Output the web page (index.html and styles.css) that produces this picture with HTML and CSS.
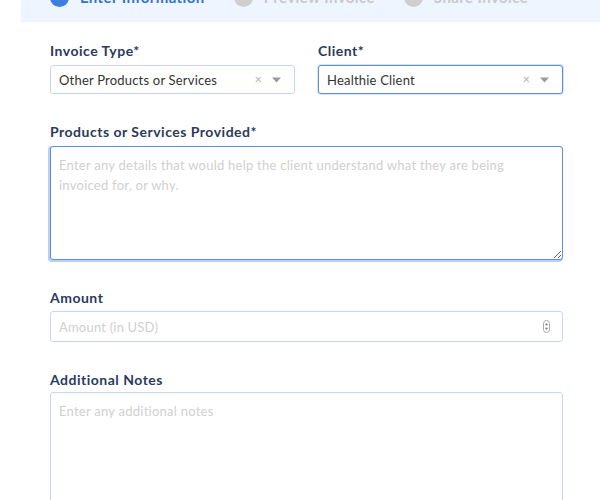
FILE: index.html
```html
<!DOCTYPE html>
<html lang="en">
<head>
<meta charset="utf-8">
<title>Create Invoice</title>
<link rel="stylesheet" href="styles.css">
</head>
<body>
<div class="page">
  <div class="steps">
    <div class="steps-inner">
      <div class="step step-active">
        <span class="step-dot"><svg width="10" height="10" viewBox="0 0 10 10"><path d="M2 5.2l2 2 4-4.4" fill="none" stroke="#fff" stroke-width="1.6"/></svg></span>
        <span class="step-label">Enter Information</span>
      </div>
      <div class="step">
        <span class="step-dot"></span>
        <span class="step-label">Preview Invoice</span>
      </div>
      <div class="step">
        <span class="step-dot"></span>
        <span class="step-label">Share Invoice</span>
      </div>
    </div>
  </div>

  <form class="form">
    <div class="row">
      <div class="field">
        <label class="label">Invoice Type*</label>
        <div class="select">
          <span class="select-value">Other Products or Services</span>
          <span class="select-clear">×</span>
          <svg class="select-arrow" width="9" height="6" viewBox="0 0 9 6"><path d="M0 0.5h9L4.5 5.5z" fill="#9a9a9a"/></svg>
        </div>
      </div>
      <div class="field">
        <label class="label">Client*</label>
        <div class="select select-focus">
          <span class="select-value">Healthie Client</span>
          <span class="select-clear">×</span>
          <svg class="select-arrow" width="9" height="6" viewBox="0 0 9 6"><path d="M0 0.5h9L4.5 5.5z" fill="#9a9a9a"/></svg>
        </div>
      </div>
    </div>

    <div class="field">
      <label class="label">Products or Services Provided*</label>
      <textarea class="textarea textarea-focus" placeholder="Enter any details that would help the client understand what they are being invoiced for, or why."></textarea>
    </div>

    <div class="field field-amount">
      <label class="label">Amount</label>
      <div class="input">
        <input class="input-field" type="text" placeholder="Amount (in USD)">
        <svg class="spinner" width="7" height="13" viewBox="0 0 7 13"><rect x="0.5" y="0.5" width="6" height="12" rx="3" fill="#fff" stroke="#a8a8a8"/><path d="M3.5 3l1.6 2.2H1.9z" fill="#777"/><path d="M3.5 10l1.6-2.2H1.9z" fill="#777"/></svg>
      </div>
    </div>

    <div class="field field-notes">
      <label class="label">Additional Notes</label>
      <textarea class="textarea textarea-tall" placeholder="Enter any additional notes"></textarea>
    </div>
  </form>
</div>
</body>
</html>
```
FILE: styles.css
```css
html, body {
  margin: 0;
  padding: 0;
  background: #fff;
}
body {
  font-family: Lato, "Noto Sans", "Liberation Sans", sans-serif;
  color: #333;
}
.page {
  padding-left: 21px;
}
.steps {
  height: 22px;
  background: #eef5fe;
  overflow: hidden;
}
.steps-inner {
  display: flex;
  align-items: center;
  margin-top: -14px;
  padding-left: 29px;
  height: 22px;
}
.step {
  display: flex;
  align-items: center;
  margin-right: 29px;
}
.step-dot {
  width: 19px;
  height: 19px;
  border-radius: 50%;
  background: #cfcfcf;
  display: flex;
  align-items: center;
  justify-content: center;
  margin-right: 11px;
}
.step-label {
  font-size: 15px;
  font-weight: 700;
  color: #c9c9c9;
  letter-spacing: 0.4px;
}
.step-active .step-dot {
  background: #3d7fe0;
}
.step-active .step-label {
  color: #3670d2;
}
.form {
  padding: 20px 0 0 29px;
  width: 513px;
}
.row {
  display: grid;
  grid-template-columns: 245px 245px;
  column-gap: 23px;
}
.field {
  margin-bottom: 29px;
}
.label {
  display: block;
  font-size: 14px;
  line-height: 17px;
  font-weight: 700;
  color: #2b3a5c;
  letter-spacing: 0.5px;
  margin-bottom: 6px;
}
.field-amount .label {
  margin-bottom: 5px;
}
.field-notes .label {
  margin-bottom: 4px;
}
.select {
  box-sizing: border-box;
  height: 29px;
  border: 1px solid #c3d8f7;
  border-radius: 3px;
  display: flex;
  align-items: center;
  padding: 0 13px 0 8px;
  background: #fff;
}
.select-focus {
  border-color: #5d8fe6;
  box-shadow: 0 0 0 1px #d3e3fb;
}
.select-value {
  flex: 1;
  font-size: 13px;
  color: #333;
  letter-spacing: 0.2px;
}
.select-clear {
  font-size: 13px;
  color: #b5b5b5;
  margin-right: 10px;
  line-height: 1;
}
.select-arrow {
  display: block;
}
.textarea {
  box-sizing: border-box;
  display: block;
  width: 513px;
  height: 114px;
  border: 1px solid #c3d8f7;
  border-radius: 3px;
  padding: 8px 40px 8px 8px;
  font-family: Lato, "Noto Sans", "Liberation Sans", sans-serif;
  font-size: 13px;
  line-height: 20px;
  letter-spacing: 0.25px;
  color: #333;
  resize: vertical;
  outline: none;
  margin: 0;
}
.textarea::placeholder {
  color: #d0d0d0;
}
.textarea-focus {
  border-color: #5d8fe6;
  box-shadow: -1px 1px 0 1px #b8d0f6;
}
.textarea-tall {
  height: 120px;
}
.input {
  box-sizing: border-box;
  height: 31px;
  border: 1px solid #c3d8f7;
  border-radius: 3px;
  display: flex;
  align-items: center;
  padding: 0 12px 0 8px;
}
.input-field {
  flex: 1;
  border: none;
  outline: none;
  padding: 0;
  font-family: Lato, "Noto Sans", "Liberation Sans", sans-serif;
  font-size: 13px;
  letter-spacing: 0.2px;
  color: #333;
  background: transparent;
}
.input-field::placeholder {
  color: #d0d0d0;
}
.spinner {
  display: block;
}
```
